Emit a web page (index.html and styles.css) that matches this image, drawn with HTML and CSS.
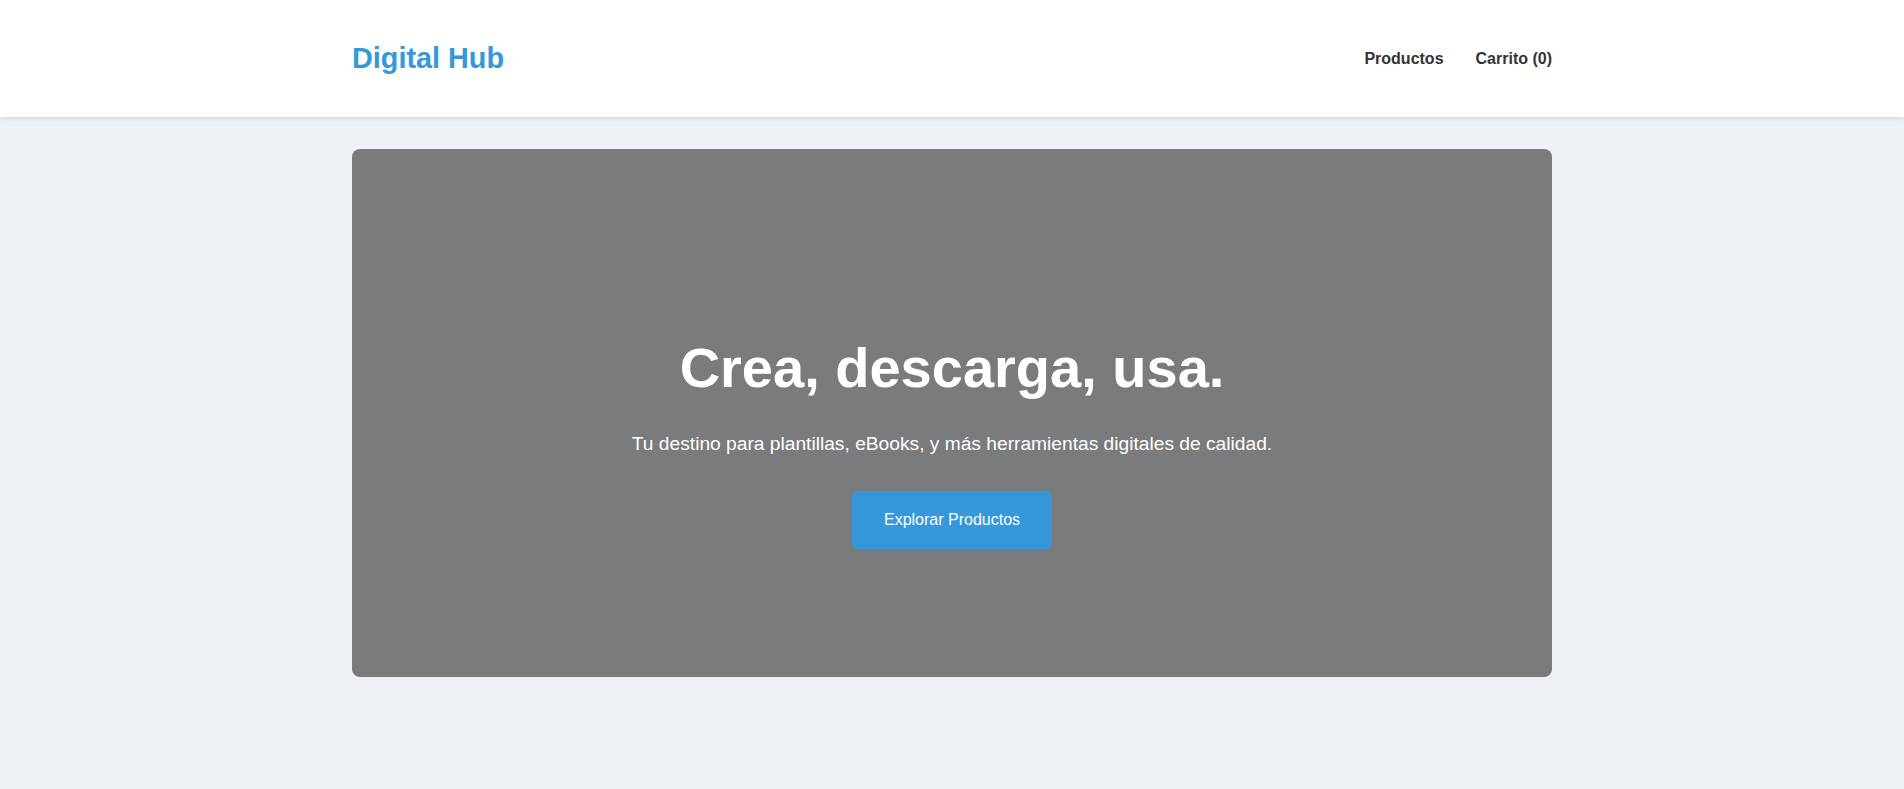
FILE: index.html
```html
<!DOCTYPE html>
<html lang="es">
<head>
<meta charset="utf-8">
<title>Digital Hub</title>
<link rel="stylesheet" href="styles.css">
</head>
<body>
<header class="site-header">
  <div class="container header-inner">
    <a class="logo" href="#">Digital Hub</a>
    <nav class="nav">
      <a href="#" class="nav-link">Productos</a>
      <a href="#" class="nav-link">Carrito (0)</a>
    </nav>
  </div>
</header>
<main class="container main">
  <section class="hero">
    <h1 class="hero-title">Crea, descarga, usa.</h1>
    <p class="hero-text">Tu destino para plantillas, eBooks, y más herramientas digitales de calidad.</p>
    <a href="#" class="btn">Explorar Productos</a>
  </section>
</main>
</body>
</html>
```
FILE: styles.css
```css
* { box-sizing: border-box; }
html, body { margin: 0; padding: 0; }
body {
  font-family: "Liberation Sans", Arial, sans-serif;
  line-height: 1.6;
  color: #333;
  background: #eef2f7;
}
a { text-decoration: none; }
.container {
  max-width: 1200px;
  margin: 0 auto;
}
.site-header {
  background: #fff;
  box-shadow: 0 2px 4px rgba(0, 0, 0, 0.1);
}
.header-inner {
  display: flex;
  justify-content: space-between;
  align-items: center;
  min-height: 117px;
}
.logo {
  font-size: 28.8px;
  font-weight: 700;
  color: #3498db;
}
.nav {
  display: flex;
  gap: 32px;
}
.nav-link {
  color: #333;
  font-weight: 700;
  font-size: 16px;
}
.main {
  padding-top: 32px;
}
.hero {
  background: #7a7b7d;
  border-radius: 8px;
  color: #fff;
  display: flex;
  flex-direction: column;
  align-items: center;
  text-align: center;
  padding: 174px 32px 128px;
}
.hero-title {
  margin: 0 0 16px;
  font-size: 56px;
  line-height: 1.6;
  font-weight: 700;
}
.hero-text {
  margin: 0 0 32px;
  font-size: 19.2px;
}
.btn {
  display: block;
  background: #3498db;
  color: #fff;
  font-size: 16px;
  padding: 16px 32px;
  border-radius: 5px;
}
```
